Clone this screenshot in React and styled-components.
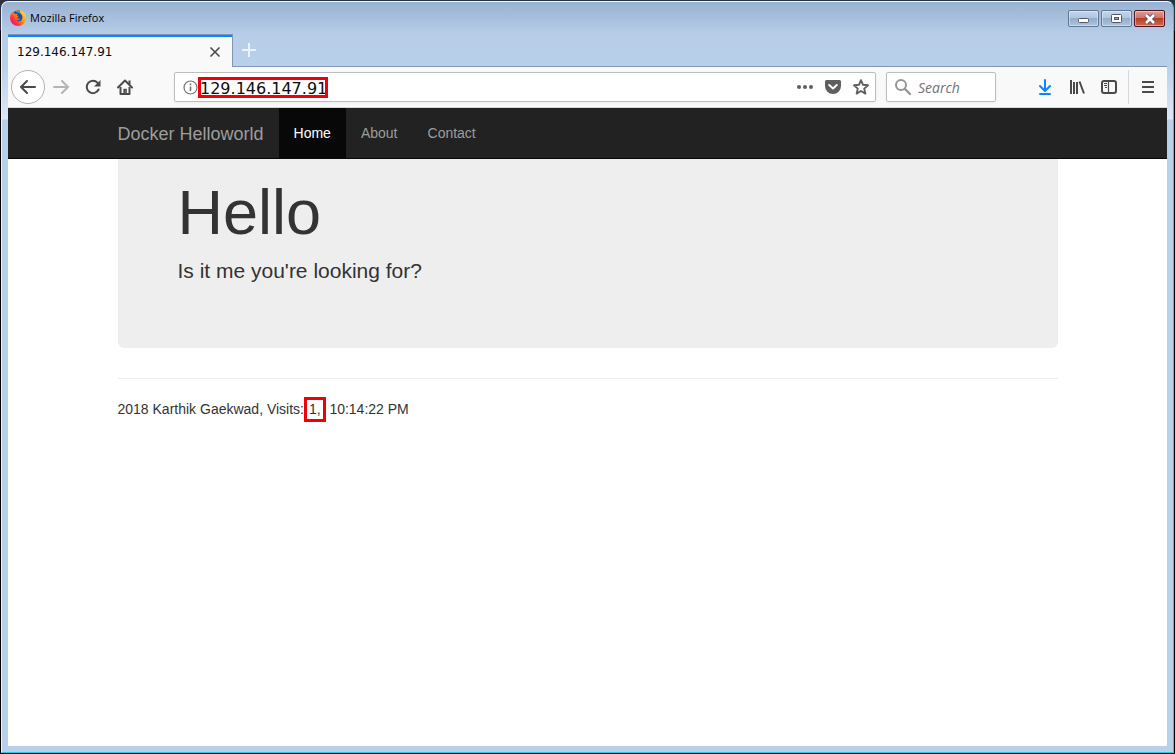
import React, { useState } from 'react';
import styled, { createGlobalStyle } from 'styled-components';

const GlobalStyle = createGlobalStyle`
	:root {
		--color-glass: #b9d0ea;
		--color-chrome: #f9f9fa;
		--color-icon: #4a4a4a;
		--color-accent: #0a84ff;
		--color-mark: #f00008;
		--font-ui: 'Open Sans', 'Noto Sans', sans-serif;
		--font-address: 'DejaVu Sans', sans-serif;
		--font-page: 'Liberation Sans', Arial, sans-serif;
	}
	*,
	*::after {
		box-sizing: border-box;
	}
	body {
		margin: 0;
		background: #08080c;
	}
	button,
	input {
		margin: 0;
		padding: 0;
		border: 0;
		background: none;
		font: inherit;
		color: inherit;
		outline: none;
	}
	svg {
		display: block;
		flex: none;
	}
`;

const Desktop = styled.div`
	display: flex;
	min-height: 100vh;
	padding: 1px;
	background: linear-gradient(#2c3142 0, #2c3142 30px, #000 31px);
`;

const Window = styled.div`
	flex: 1;
	min-width: 0;
	display: flex;
	flex-direction: column;
	padding: 0 6px 6px;
	border: 1px solid;
	border-color: #f4f8fc #27cbe0 #27cbe0 #e9f2fb;
	border-radius: 7px 7px 0 0;
	background: linear-gradient(
		#98b2d2 0,
		#b7cde8 32px,
		var(--color-glass) 64px,
		#dde8f6 117px,
		var(--color-glass) 118px
	);
`;

const TitleBar = styled.div`
	display: flex;
	align-items: center;
	gap: 4px;
	height: 32px;
	padding: 0 2px;
	font: 11px/16px var(--font-ui);
	color: #000;
	span {
		flex: 1;
	}
`;

const WindowButtons = styled.div`
	display: flex;
	align-self: flex-start;
	gap: 2px;
	padding-top: 8px;
`;

const WindowButton = styled.button`
	display: flex;
	align-items: center;
	justify-content: center;
	width: 31px;
	height: 17px;
	border: 1px solid ${(props) => (props.$close ? '#4d1420' : '#5f7590')};
	border-radius: 2px;
	background: ${(props) =>
		props.$close
			? 'linear-gradient(#dd9c92, #cf7568 45%, #b93c28 50%, #cd6a50)'
			: 'linear-gradient(#c4d6ea, #b0c6df 45%, #93adca 50%, #abc5e0)'};
	box-shadow: inset 0 0 0 1px rgba(255, 255, 255, 0.4);
`;

const TabStrip = styled.div`
	display: flex;
	height: 33px;
	border-bottom: 1px solid #8097b3;
`;

const Tab = styled.div`
	display: flex;
	align-items: center;
	justify-content: space-between;
	width: 225px;
	height: 33px;
	padding: 2px 9px 0;
	border-top: 1px solid #8097b3;
	border-right: 1px solid #8097b3;
	background: linear-gradient(var(--color-accent) 2px, var(--color-chrome) 2px);
	font: 12px/16px var(--font-address);
	color: #0c0c0d;
`;

const TabButton = styled.button`
	display: flex;
	align-items: center;
	justify-content: center;
	width: 16px;
	height: 30px;
`;

const NewTabButton = styled(TabButton)`
	width: 32px;
	height: 32px;
`;

const Toolbar = styled.div`
	display: flex;
	align-items: center;
	height: 41px;
	padding: 0 3px;
	border-bottom: 1px solid #d5d7d9;
	background: var(--color-chrome);
`;

const ToolButton = styled.button`
	display: flex;
	align-items: center;
	justify-content: center;
	flex: none;
	width: 32px;
	height: 32px;
	color: ${(props) => props.$color || 'var(--color-icon)'};
`;

const BackButton = styled(ToolButton)`
	width: 34px;
	height: 34px;
	border: 1px solid #b1b1b3;
	border-radius: 50%;
	background: #fff;
`;

const Field = styled.div`
	display: flex;
	align-items: center;
	height: 30px;
	border: 1px solid #bebebf;
	border-radius: 2px;
	background: #fff;
	box-shadow: 0 1px 3px rgba(0, 0, 0, 0.06);
`;

const AddressField = styled(Field)`
	flex: 1;
	min-width: 0;
	margin: 0 10px 0 33px;
	padding-left: 8px;
`;

const Address = styled.label`
	position: relative;
	flex: 1;
	min-width: 0;
	display: flex;
	padding-left: 2px;
	input {
		width: 100%;
		height: 21px;
		padding-top: 2px;
		font: 16px/19px var(--font-address);
		color: #0c0c0d;
	}
	&::after {
		content: '';
		position: absolute;
		top: 0;
		left: 0;
		width: 130px;
		height: 21px;
		border: 3px solid var(--color-mark);
		pointer-events: none;
	}
`;

const FieldButton = styled(ToolButton)`
	width: 28px;
	height: 28px;
	color: #5f5f60;
`;

const SearchField = styled(Field).attrs({ as: 'label' })`
	flex: none;
	width: 110px;
	gap: 6px;
	margin-right: 33px;
	padding: 0 8px 0 7px;
	input {
		width: 100%;
		min-width: 0;
		padding-top: 2px;
		font: italic 14px/20px var(--font-ui);
	}
	input::placeholder {
		color: #737373;
		opacity: 1;
	}
`;

const Separator = styled.div`
	width: 1px;
	height: 34px;
	margin: 0 3px;
	background: #d7d7db;
`;

const Page = styled.div`
	flex: 1;
	background: #fff;
	font: 14px/20px var(--font-page);
	color: #333;
`;

const Navbar = styled.nav`
	border-bottom: 1px solid #080808;
	background: #222;
`;

const Container = styled.div`
	max-width: 940px;
	margin: 0 auto;
`;

const NavRow = styled(Container)`
	display: flex;
`;

const NavLink = styled.a`
	padding: 15px;
	background: ${(props) => (props.$active ? '#080808' : 'transparent')};
	color: ${(props) => (props.$active ? '#fff' : '#9d9d9d')};
	text-decoration: none;
`;

const Brand = styled(NavLink)`
	padding: 15px 15px 13px 0;
	font-size: 18px;
	line-height: 22px;
`;

const Jumbotron = styled.header`
	padding: 18px 60px 48px;
	border-radius: 0 0 6px 6px;
	background: #eee;
	h1 {
		margin: 0 0 8px;
		font-size: 63px;
		font-weight: 500;
		line-height: 71px;
	}
	p {
		margin: 0 0 15px;
		font-size: 21px;
		line-height: 29px;
	}
`;

const Footer = styled.footer`
	margin-top: 30px;
	padding-top: 20px;
	border-top: 1px solid #eee;
	p {
		margin: 0;
		white-space: pre-wrap;
	}
`;

const Marked = styled.span`
	position: relative;
	padding: 0 1px;
	&::after {
		content: '';
		position: absolute;
		inset: -4px -4px -5px;
		border: 3px solid var(--color-mark);
	}
`;

const FirefoxLogo = () => (
	<svg width="16" height="16" viewBox="0 0 16 16">
		<defs>
			<linearGradient id="fox" x1="0.9" y1="0.1" x2="0.1" y2="0.8">
				<stop offset="0" stopColor="#ffe03b" />
				<stop offset="0.4" stopColor="#ff9a15" />
				<stop offset="0.75" stopColor="#ff3b30" />
				<stop offset="1" stopColor="#e5158a" />
			</linearGradient>
		</defs>
		<circle cx="8" cy="8" r="8" fill="url(#fox)" />
		<path fill="#1b4fa8" d="M3.500 2.500C5 .6 8 0 10 .8c-.5 1.700.6 2.600 1.500 3.800 1.300 1.700 1.300 4-.1 5.600-1.300 1.400-3.600 1.500-4.900.2 1.500.2 2-.8 3-1 .4-.1.3-.6-.2-.9-.9-.4-1.600.3-2.500-.2.400-.9 1.700-1 1.800-1.900L6.800 6C6.900 5.200 7.500 4.600 8 4.100c-.8-.2-1.500 0-2 .2-.8-.5-1.600-1-2.500-1.800z" />
		<path fill="#22b0f5" d="M5 2c1.500-1.200 3.500-1.300 4.700-.9-.2 1.200.2 2 .9 2.800C8.800 2.700 6.800 2.200 5 2z" />
	</svg>
);

const ReloadIcon = () => (
	<svg width="16" height="16" viewBox="0 0 16 16">
		<path d="M13.600 10.500A6.200 6.200 0 1 1 12.600 3.800" fill="none" stroke="currentColor" strokeWidth="2" strokeLinecap="round" />
		<path d="M15.500 1v6.500H9z" fill="currentColor" />
	</svg>
);

const HomeIcon = () => (
	<svg width="16" height="16" viewBox="0 0 16 16" fill="none" stroke="currentColor" strokeWidth="2">
		<path d="M1 8.500l7-7 7 7" strokeLinecap="round" strokeLinejoin="round" />
		<path d="M3.500 8v7h9V8" strokeLinejoin="round" />
		<path d="M12.500 1.500v4" />
		<path d="M7.200 15v-4.500h1.800V15" strokeWidth="1.600" />
	</svg>
);

const App = () => {
	const [address, setAddress] = useState('129.146.147.91');
	const [query, setQuery] = useState('');

	return (
		<Desktop>
			<GlobalStyle />
			<Window>
				<TitleBar>
					<FirefoxLogo />
					<span>Mozilla Firefox</span>
					<WindowButtons>
						<WindowButton aria-label="Minimize">
							<svg width="12" height="12" viewBox="0 0 12 12">
								<rect x="0.500" y="5.500" width="10" height="4" rx="1" fill="#fff" stroke="#535666" />
							</svg>
						</WindowButton>
						<WindowButton aria-label="Maximize">
							<svg width="12" height="10" viewBox="0 0 12 10">
								<rect x="0.500" y="0.500" width="10" height="8" rx="1" fill="#fff" stroke="#535666" />
								<rect x="3.500" y="3.500" width="4" height="2" fill="#8aa6c6" stroke="#535666" />
							</svg>
						</WindowButton>
						<WindowButton $close aria-label="Close">
							<svg width="12" height="10" viewBox="0 0 12 10" fill="none">
								<path d="M2 1l8 8M10 1L2 9" stroke="#535666" strokeWidth="4.500" />
								<path d="M2 1l8 8M10 1L2 9" stroke="#fff" strokeWidth="2.600" />
							</svg>
						</WindowButton>
					</WindowButtons>
				</TitleBar>

				<TabStrip>
					<Tab>
						<span>129.146.147.91</span>
						<TabButton aria-label="Close tab">
							<svg width="12" height="12" viewBox="0 0 12 12" stroke="#4a4a4a" strokeWidth="1.600">
								<path d="M1.500 1.500l9 9M10.500 1.500l-9 9" />
							</svg>
						</TabButton>
					</Tab>
					<NewTabButton aria-label="New tab">
						<svg width="14" height="14" viewBox="0 0 14 14" stroke="#edf3fa" strokeWidth="2">
							<path d="M7 0v14M0 7h14" />
						</svg>
					</NewTabButton>
				</TabStrip>

				<Toolbar>
					<BackButton aria-label="Back">
						<svg width="16" height="14" viewBox="0 0 16 14" fill="none" stroke="currentColor" strokeWidth="2" strokeLinecap="round" strokeLinejoin="round">
							<path d="M15 7H1.500M7 1L1 7l6 6" />
						</svg>
					</BackButton>
					<ToolButton $color="#b4b4b5" aria-label="Forward">
						<svg width="16" height="14" viewBox="0 0 16 14" fill="none" stroke="currentColor" strokeWidth="2" strokeLinecap="round" strokeLinejoin="round">
							<path d="M1 7h13.500M9 1l6 6-6 6" />
						</svg>
					</ToolButton>
					<ToolButton aria-label="Reload">
						<ReloadIcon />
					</ToolButton>
					<ToolButton aria-label="Home">
						<HomeIcon />
					</ToolButton>

					<AddressField>
						<svg width="15" height="15" viewBox="0 0 15 15" fill="none" stroke="#737373">
							<circle cx="7.500" cy="7.500" r="6.500" strokeWidth="1.200" />
							<path d="M7.500 6.500V11M7.500 3.500v1.800" strokeWidth="1.600" />
						</svg>
						<Address>
							<input
								aria-label="Address"
								value={address}
								onChange={(e) => setAddress(e.target.value)}
							/>
						</Address>
						<FieldButton aria-label="Page actions">
							<svg width="16" height="4" viewBox="0 0 16 4" fill="currentColor">
								<circle cx="2" cy="2" r="2" />
								<circle cx="8" cy="2" r="2" />
								<circle cx="14" cy="2" r="2" />
							</svg>
						</FieldButton>
						<FieldButton aria-label="Save to Pocket">
							<svg width="16" height="14" viewBox="0 0 16 14">
								<path d="M1.500 0h13A1.500 1.500 0 0 1 16 1.500V6A8 8 0 0 1 0 6V1.500A1.500 1.500 0 0 1 1.500 0z" fill="currentColor" />
								<path d="M4.200 5L8 8.500 11.800 5" fill="none" stroke="#fff" strokeWidth="2" strokeLinecap="round" strokeLinejoin="round" />
							</svg>
						</FieldButton>
						<FieldButton aria-label="Bookmark this page">
							<svg width="16" height="16" viewBox="0 0 16 16" fill="none" stroke="currentColor" strokeWidth="1.900" strokeLinejoin="round">
								<path d="M8 1.200l2 4.600 5 .5-3.800 3.300 1.200 5L8 12l-4.400 2.600 1.200-5L1 6.300l5-.5z" />
							</svg>
						</FieldButton>
					</AddressField>

					<SearchField>
						<svg width="18" height="18" viewBox="0 0 18 18" fill="none" stroke="#959595" strokeLinecap="round">
							<circle cx="7" cy="7" r="5" strokeWidth="2" />
							<path d="M11 11l5 5" strokeWidth="2.400" />
						</svg>
						<input
							aria-label="Search"
							placeholder="Search"
							value={query}
							onChange={(e) => setQuery(e.target.value)}
						/>
					</SearchField>

					<ToolButton $color="var(--color-accent)" aria-label="Downloads">
						<svg width="12" height="16" viewBox="0 0 12 16" fill="none" stroke="currentColor" strokeWidth="2" strokeLinecap="round" strokeLinejoin="round">
							<path d="M6 1v10.500M1 7l5 5 5-5M1 15h10" />
						</svg>
					</ToolButton>
					<ToolButton aria-label="Library">
						<svg width="16" height="14" viewBox="0 0 16 14" stroke="currentColor" strokeWidth="2">
							<path d="M2 0v14M5 2v12M8 2v12M10.500 1.500L15 13.500" />
						</svg>
					</ToolButton>
					<ToolButton aria-label="Sidebars">
						<svg width="16" height="14" viewBox="0 0 16 14" fill="none" stroke="currentColor">
							<rect x="1" y="1" width="14" height="12" rx="2" strokeWidth="2" />
							<path d="M7.500 1v12" strokeWidth="1.200" />
							<path d="M3 3.500h3M3 5.500h3M4 7.500h2" />
						</svg>
					</ToolButton>
					<Separator />
					<ToolButton aria-label="Open menu">
						<svg width="12" height="12" viewBox="0 0 12 12" stroke="currentColor" strokeWidth="2">
							<path d="M0 1h12M0 6h12M0 11h12" />
						</svg>
					</ToolButton>
				</Toolbar>

				<Page>
					<Navbar>
						<NavRow>
							<Brand href="#">Docker Helloworld</Brand>
							<NavLink $active href="#">Home</NavLink>
							<NavLink href="#about">About</NavLink>
							<NavLink href="#contact">Contact</NavLink>
						</NavRow>
					</Navbar>
					<Container as="main">
						<Jumbotron>
							<h1>Hello</h1>
							<p>Is it me you're looking for?</p>
						</Jumbotron>
						<Footer>
							<p>
								2018 Karthik Gaekwad, Visits: <Marked>1,</Marked>{'  '}10:14:22 PM
							</p>
						</Footer>
					</Container>
				</Page>
			</Window>
		</Desktop>
	);
};

export default App;
